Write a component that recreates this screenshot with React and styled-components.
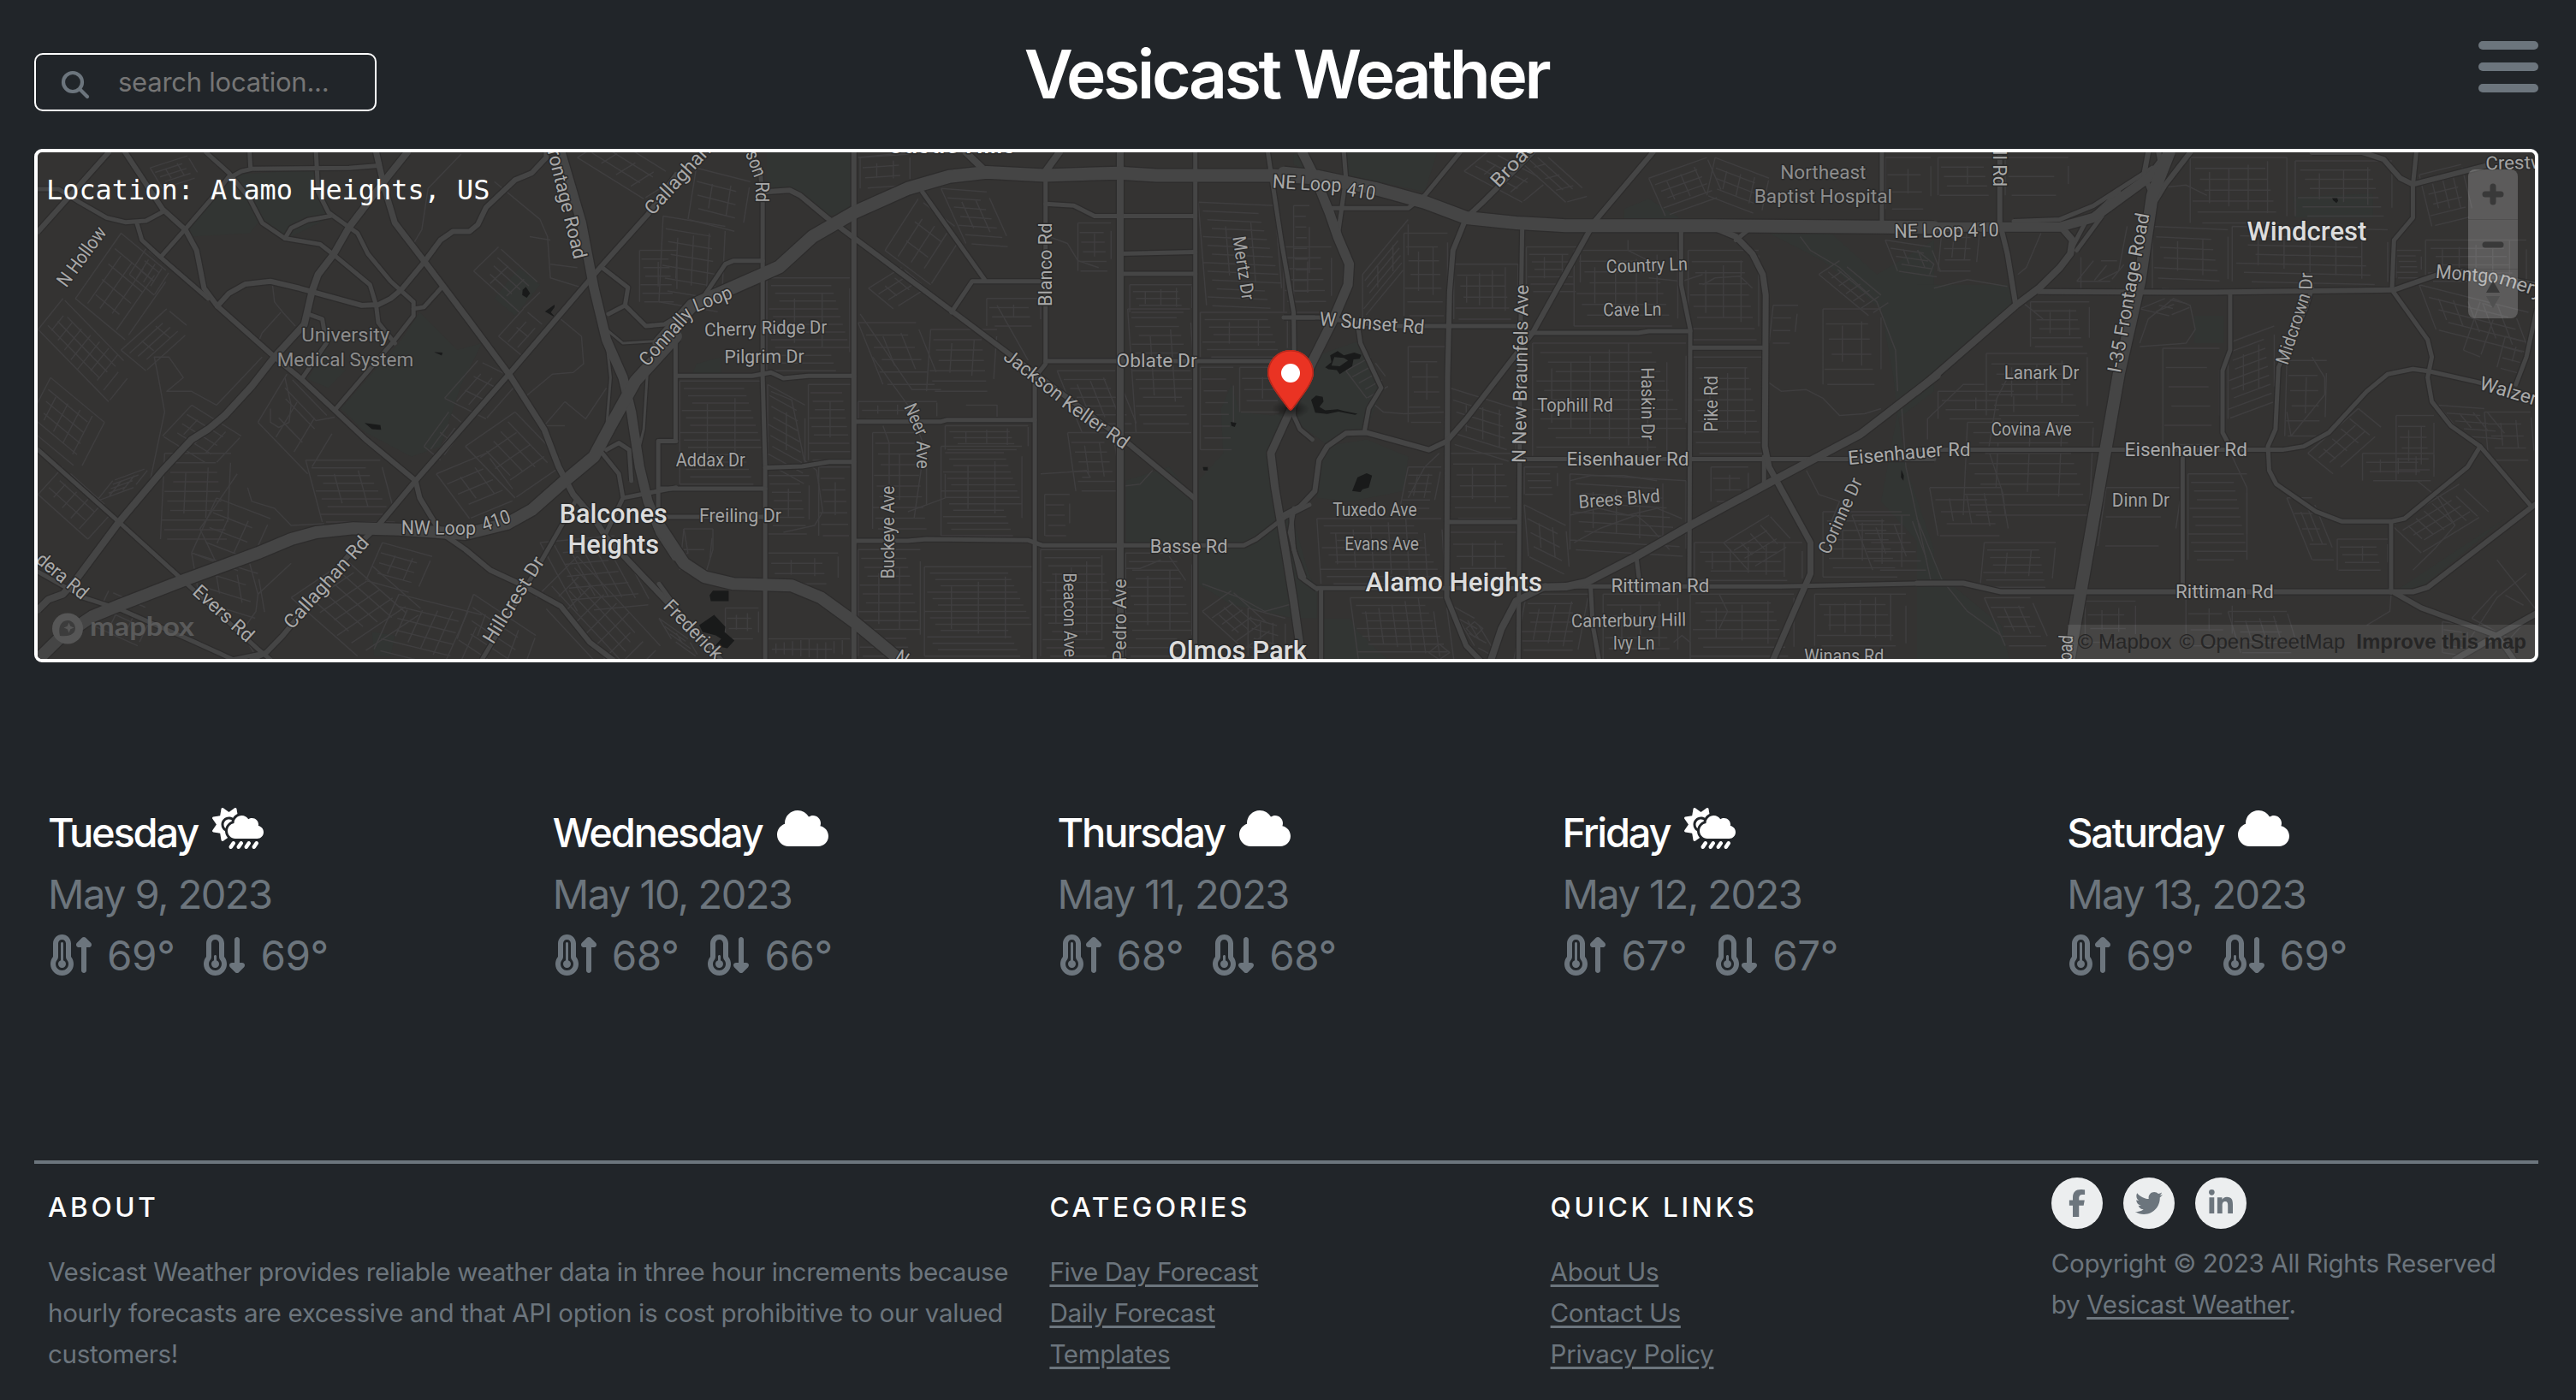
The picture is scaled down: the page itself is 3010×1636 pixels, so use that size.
import React from "react";
import styled, { createGlobalStyle } from "styled-components";
import {
  FaCloud,
  FaCloudSunRain,
  FaTemperatureArrowUp,
  FaTemperatureArrowDown,
  FaFacebookF,
  FaTwitter,
  FaLinkedinIn,
} from "react-icons/fa6";

const GlobalStyle = createGlobalStyle`
  * { box-sizing: border-box; }
  body {
    margin: 0;
    background: #212529;
    color: #fff;
    font-family: Inter, "Liberation Sans", sans-serif;
    font-size: 32px;
  }
`;

const Page = styled.div`
  display: flex;
  flex-direction: column;
  height: 1636px;
  padding: 0 44px 0 40px;
  overflow: hidden;
`;

/* ---------- header ---------- */

const Header = styled.header`
  display: grid;
  grid-template-columns: 1fr auto 1fr;
  flex: none;
  height: 174px;
`;

const SearchBox = styled.label`
  display: flex;
  align-items: center;
  width: 400px;
  height: 68px;
  margin-top: 62px;
  padding-left: 29px;
  border: 2px solid #fff;
  border-radius: 10px;
  color: #6c757d;
`;

const SearchIcon = styled.svg`
  flex: none;
  width: 34px;
  height: 34px;
  margin: 6px 33px 0 0;
`;

const SearchInput = styled.input`
  width: 270px;
  padding: 0;
  border: 0;
  outline: 0;
  background: transparent;
  color: #fff;
  font: 400 31px/48px Inter, sans-serif;
  letter-spacing: -0.25px;
  &::placeholder { color: #757575; opacity: 1; }
`;

const Title = styled.h1`
  margin: 39px 0 0;
  font-weight: 600;
  font-size: 78.5px;
  line-height: 96px;
  letter-spacing: -3.4px;
`;

const MenuButton = styled.div`
  display: flex;
  flex-direction: column;
  gap: 15px;
  justify-self: end;
  margin-top: 48px;
`;

const MenuBar = styled.span`
  width: 70px;
  height: 10px;
  border-radius: 5px;
  background: #6c757d;
`;

/* ---------- map ---------- */

const MapFrame = styled.section`
  position: relative;
  flex: none;
  height: 600px;
  border: 4px solid #fff;
  border-radius: 9px;
  overflow: hidden;
  background: #343332;
`;

const MapCanvas = styled.svg`
  display: block;
  width: 2918px;
  height: 592px;
`;

const MapCaption = styled.div`
  position: absolute;
  left: 10px;
  top: 24px;
  font: 400 31.9px/40px "DejaVu Sans Mono", monospace;
  color: #fff;
  white-space: nowrap;
`;

const MapControls = styled.div`
  position: absolute;
  top: 20px;
  right: 20px;
  width: 58px;
  border-radius: 8px;
  background: rgba(255, 255, 255, 0.2);
`;

const MapControl = styled.div`
  height: 58px;
  & + & { border-top: 1px solid rgba(40, 40, 40, 0.2); }
  svg { display: block; width: 58px; height: 58px; }
`;

const Attribution = styled.div`
  position: absolute;
  right: 0;
  bottom: 0;
  display: flex;
  gap: 9px;
  height: 40px;
  padding: 0 10px 0 12px;
  background: rgba(255, 255, 255, 0.09);
  color: #262626;
  font: 400 24px/40px "Liberation Sans", Arial, sans-serif;
  b { margin-left: 4px; }
`;

/*
 * The city is split into four tiles. Each one has its own drawing units,
 * 1568 on a side, and covers ox..ox+1568/sx on the canvas.
 */
const TILES = {
  a: { ox: 30, sx: 2.0632 },
  b: { ox: 770, sx: 2.0632 },
  c: { ox: 1500, sx: 2.0632 },
  d: { ox: 2240, sx: 2.0364 },
};
const OY = 160;
const SY = 2.4889;

const toCanvas = (tile, x, y) => [TILES[tile].ox + x / TILES[tile].sx, OY + y / SY];
const tileTransform = (tile) =>
  `translate(${TILES[tile].ox} ${OY}) scale(${1 / TILES[tile].sx} ${1 / SY})`;

const PARKS = {
  a: [
    "M490 110L700 95L740 230L640 290L560 250L540 280L400 290L385 268Z",
    "M950 510L1040 620L1100 600L1050 720L1000 900L930 930L820 860L760 790L900 600Z",
    "M1190 380L1240 430L1180 520L1130 470Z",
    "M835 1440L890 1450L880 1510H840Z",
    "M720 620L770 680L730 730L680 705Z",
  ],
  b: [
    "M260 45H470V220L400 230L320 150H260Z",
    "M1125 1000L1230 960L1290 1050V1180H1125Z",
    "M1355 790L1380 720L1400 800L1480 810L1520 800L1475 920L1500 1180L1530 1400L1380 1360L1300 1300V1000L1360 920Z",
    "M1530 50H1568V100L1530 80Z",
    "M90 660L150 640V690H80Z",
  ],
  c: [
    "M150 45H370L340 160L150 110Z",
    "M70 640L190 590L235 740L200 850L110 900L30 830Z",
    "M100 900L200 880L300 930L290 1030L160 1060L80 1050Z",
    "M1170 280H1320L1430 400L1568 300V740L1480 820L1470 700L1440 500L1300 360Z",
    "M1480 800L1500 960L1568 1200V1320L1530 1180L1440 1060Z",
    "M95 1400L160 1400L180 1440L250 1520H95Z",
    "M0 1100L20 1100L60 1270L80 1320V1400H30Z",
    "M820 210L880 180L960 240H820Z",
  ],
  d: [
    "M0 430H215L235 490L0 740Z",
    "M0 1110L60 1280L200 1420L220 1520H0Z",
    "M895 175L1085 165V235H900Z",
    "M1300 1190L1400 1110L1200 1310L1140 1320Z",
    "M660 520H730V600H660Z",
  ],
};

const WATER = {
  a: [
    "M1198 445L1206 436L1216 455L1208 468L1197 460Z",
    "M1275 488L1252 508L1278 526L1266 510L1275 495Z",
    "M985 626L1005 627L1003 636Z",
    "M817 832L855 838L857 852L835 850Z",
  ],
  b: [
    "M122 1333L130 1320H168V1350H125Z",
    "M97 1420L133 1390L160 1425L158 1440L182 1465L165 1487L135 1480L150 1460L137 1450L105 1440Z",
    "M1378 829L1392 832L1388 844L1380 840Z",
    "M1311 960H1323V970H1313Z",
  ],
  c: [
    "M100 670L115 655L112 635L130 623L145 635L170 627L187 634L183 645L168 647L165 667L135 690L128 678L108 676ZM122 640L115 665L135 667L155 650L145 643Z",
    "M66 765L78 752L94 756L96 770L86 785L100 795L130 792L145 797L178 805L172 808L132 799L105 806L76 802Z",
    "M165 1030L178 990L200 978L213 985L205 1020L190 1025L185 1033Z",
    "M1489 968L1495 985L1494 1000L1488 990Z",
  ],
  d: ["M988 178H1000L1002 186L998 192L990 184Z"],
};

/* [stroke width, path] */
const ROADS = {
  a: [
    [6, "M30 275L200 45M240 45L330 210L385 270L412 330L430 440L462 492L600 640L665 705L745 795L820 880L940 1000L950 1050L1000 1150L1060 1200L1120 1260L1200 1305L1290 1365L1360 1470L1415 1520"],
    [5, "M435 45L490 105L540 180L570 250L625 295L710 312L742 342L830 430L845 490L850 540L890 600"],
    [5, "M540 45L542 93M490 120L520 100L545 93L780 90L845 84M700 45L705 160L730 220L800 280L825 340L880 420L935 480L935 520L890 590L745 795"],
    [5, "M325 350L385 268L455 170L490 115M30 152L80 152L130 190L195 235L240 248L290 244L335 215M268 250L280 300L325 350L440 470"],
    [6, "M462 492L490 455L530 428L590 420L660 440L810 490L850 488L880 470L905 445L960 365L1000 300L1030 275L1070 275L1090 255L1110 205L1180 125L1220 105L1255 60V45"],
    [5, "M625 295L640 265L680 242L735 230M935 500L960 495L1005 435M680 515L715 530L725 600L665 705"],
    [6, "M1568 110L1500 225L1385 380L1165 690L940 1000L850 1130L790 1200L620 1450L580 1500L545 1520"],
    [5, "M1390 380L1452 438L1445 490L1495 550L1540 545L1568 525M1405 515L1445 490"],
    [5, "M30 910L225 1120L380 1290L560 1490L590 1520M30 1265L140 1340L230 1375L400 1465L500 1520L580 1500"],
    [5, "M1100 1520L1240 1240L1330 1050M1400 910L1430 890L1455 910L1460 1000M1390 920L1430 980L1440 1050L1400 1150M1440 1050L1568 1020M1525 1110V885H1568"],
    [3, "M1375 440L1400 590L1410 700L1400 850M1500 660L1490 850L1480 900M1400 560L1440 600L1568 590"],
    [7, "M845 45L865 150L890 250L960 360L1060 520L1165 690L1250 850L1285 960L1320 1040L1370 1110L1400 1165L1490 1280L1585 1400"],
    [8, "M920 45L870 120L780 262L742 342L705 400L690 450L672 545L600 640L545 725L480 810L440 850L400 880L330 970L225 1120L120 1290L90 1330L55 1345L30 1375"],
    [11, "M1290 45L1340 250L1370 440L1400 590L1440 700L1460 800L1480 960L1500 1060L1530 1150L1568 1220"],
    [14, "M25 1525L80 1460L160 1395L230 1360L380 1290L560 1210L640 1170L700 1150L790 1138L900 1142L1060 1155L1160 1125L1220 1085L1300 1000L1370 930L1410 840L1470 710L1568 580"],
  ],
  b: [
    [5, "M225 45L245 110L250 190V700L256 960V1520M932 120V660L906 700V1520M1293 45V1520"],
    [6, "M255 160L315 155L340 170L405 235L710 510L1130 890L1290 1050"],
    [5, "M635 160L785 415M705 510L755 420H925M932 195L1000 200L1050 230H1293M1112 340L1293 335M1112 398H1293"],
    [5, "M250 360H180L160 370L110 460M932 652H1510M40 590V885H0M40 695H225L270 685L300 702L360 695H470"],
    [5, "M470 828H680L695 823H906M256 962L345 958L410 945H470M0 1023H256M0 1105H256"],
    [5, "M470 1175H600L645 1170L890 1173L925 1188H1410L1440 1170L1510 1105L1568 1070M1530 525H1580"],
    [5, "M1468 45L1500 300L1530 510L1532 700L1530 810L1545 850L1575 880M1524 1100L1530 1200L1555 1280"],
    [5, "M0 1300L60 1400L150 1520"],
    [6, "M470 45V1520"],
    [8, "M1112 45V1520M740 45L790 103M932 100L965 45"],
    [9, "M1524 790L1475 920L1485 1020L1510 1200L1530 1350L1550 1520"],
    [14, "M0 1130L60 1240L110 1280L180 1300L320 1305L390 1340L470 1410L590 1530"],
    [15, "M0 600L80 490L250 400L290 378L370 290L470 220L600 150L700 115L790 103L930 112L1050 107L1110 105L1200 112L1480 112L1568 118"],
  ],
  c: [
    [5, "M145 45L150 120L130 290M110 207H300L340 170L425 45M0 525H85L240 550H580M590 570H855L880 565H980"],
    [6, "M440 235L480 190L600 45M440 235L408 330L400 450L395 700L393 1340L440 1480L480 1530"],
    [5, "M575 260L570 640L566 1520M958 270V430L980 560L978 1290M1158 930V1010M980 613H1162M580 937H1568"],
    [5, "M80 1315L40 1280L15 1150L25 1080M90 1312V1520M393 1120H566M740 1310L745 1420L760 1520M850 1220L858 1300"],
    [5, "M180 560L185 600L235 730L205 790L195 855M1442 45V260M1090 300L1120 270M700 1307H1200L1568 1298"],
    [6, "M890 45L750 245L600 570L440 820L393 885L350 910L200 860L150 862L105 900L85 940L75 1030L40 1075L0 1100"],
    [7, "M1040 265L1090 290L1130 340L1155 400L1162 460L1160 900L1170 960L1270 1180V1270L1180 1520"],
    [9, "M1575 693L1390 865L1180 1000L980 1130L850 1220L730 1295L680 1308L620 1310"],
    [5, "M620 1312H80"],
    [8, "M630 1308L560 1350L525 1430L500 1520"],
    [11, "M45 45L80 130L110 220L130 290L158 370L155 430L120 530L70 650L20 780"],
    [15, "M0 105L80 115L220 150L340 190L440 235L560 250L680 258H1040L1440 262L1568 263"],
  ],
  d: [
    [5, "M745 455V620L727 680V860L740 890M0 910H870L920 900L980 860L1070 740L1120 690L1180 675L1220 682L1330 712L1480 760"],
    [5, "M1188 45L1180 140V235L1135 300L1130 445L1215 590L1225 640L1215 700L1225 770L1270 840L1340 900L1462 1075"],
    [5, "M940 440L925 500L860 670L853 850L835 900L838 970L855 1010L950 1090L1010 1118H1130L1160 1110L1310 960L1340 900"],
    [5, "M1475 500L1450 640L1425 720M632 930V1310M1128 1120V1325"],
    [6, "M0 1298H110L200 1323H1180L1215 1310L1475 1065M1135 1325L1200 1370L1380 1450L1420 1520"],
    [7, "M1280 1520L1380 1450L1475 1385"],
    [6, "M197 45V250L215 340L235 490M940 45H1060L1110 65L1150 120L1180 138L1350 85"],
    [6, "M290 450L700 452L1135 445L1240 400L1300 390L1475 430"],
    [5, "M230 245L340 240L420 200L560 90M370 320L400 250L480 160M380 330L440 230"],
    [8, "M345 265L370 300L365 340L340 380L290 440L235 490L0 740"],
    [6, "M550 45L540 110L560 170M650 45L590 140L560 200M575 45L585 110"],
    [11, "M0 262L340 262L420 235L560 110L600 45"],
    [14, "M600 45L560 170L530 420L480 690L440 970L400 1250L360 1530"],
  ],
};

/* Residential grids: origin, two edge vectors, number of streets along each. */
const GRIDS = {
  a: [
    [30, 560, 170, 210, 60, -90, 4, 9], [120, 470, 110, -190, 120, 120, 5, 5], [60, 700, 130, 130, -60, 140, 5, 5],
    [250, 400, 40, -75, 60, 60, 4, 3], [335, 920, 160, 0, -10, 250, 9, 3], [400, 780, 120, 90, -70, 90, 4, 4],
    [675, 940, 180, 0, 40, 180, 8, 3], [560, 830, 70, -140, 120, 150, 3, 3], [460, 1050, 130, 60, -60, 160, 4, 3],
    [1010, 760, 80, -110, 100, 60, 4, 3], [1060, 900, 120, -100, 120, 150, 4, 5], [990, 980, 120, -60, 80, 130, 4, 3],
    [1080, 390, 60, -70, 110, 120, 3, 4], [960, 900, 60, -100, 40, 40, 3, 2], [1240, 1180, 90, 200, 180, -20, 6, 6],
    [1330, 1220, 200, 260, -100, 120, 6, 8], [860, 1180, 120, 40, -40, 110, 4, 3], [640, 1340, 160, -130, 160, 170, 6, 6],
    [900, 1330, 200, 60, -60, 160, 5, 6], [400, 1210, 160, 60, 20, 140, 3, 3], [30, 1040, 120, 130, 60, -80, 3, 5],
    [300, 90, 90, -35, 30, 60, 4, 3], [1330, 60, 160, 120, 80, -60, 3, 4],
    [1480, 330, 90, 0, 0, 150, 6, 2], [1080, 1330, 150, 120, -40, 130, 4, 4], [160, 1420, 110, 60, 40, -100, 2, 3],
    [170, 1060, 40, -60, 90, -40, 3, 4], [230, 620, 110, -120, 60, 60, 4, 3], [1140, 580, 60, -80, 60, 60, 3, 2],
  ],
  b: [
    [10, 230, 150, 30, -10, 250, 7, 4], [90, 90, 130, 40, -20, 150, 4, 3], [260, 410, 200, 0, 0, 270, 12, 3],
    [50, 710, 200, 0, 0, 300, 14, 3], [262, 720, 90, 60, 0, 230, 8, 2], [360, 720, 105, 0, 0, 220, 9, 2],
    [262, 985, 100, 0, 0, 170, 7, 2], [385, 960, 80, 0, 0, 200, 6, 2], [485, 60, 120, -10, 0, 90, 3, 3],
    [545, 330, 80, -150, 110, 100, 4, 3], [680, 150, 110, 10, 60, 160, 6, 3], [505, 440, 80, -60, 60, 60, 3, 3],
    [480, 540, 140, 0, 60, 180, 5, 3], [655, 560, 160, 0, -10, 180, 6, 3], [480, 770, 190, 0, 0, 50, 2, 4],
    [515, 860, 130, 0, 0, 280, 9, 2], [680, 900, 195, 0, 0, 260, 14, 3], [690, 840, 200, 0, 0, 70, 4, 4],
    [480, 1200, 150, 0, 0, 310, 12, 3], [640, 1250, 260, 0, 0, 260, 14, 4], [920, 1200, 185, 0, 0, 310, 13, 5],
    [1125, 1210, 160, 0, 0, 300, 12, 3], [960, 680, 140, 0, 60, 180, 7, 4], [985, 860, 110, 0, 20, 170, 6, 3],
    [1130, 500, 150, 0, 20, 360, 14, 3], [1135, 430, 150, 0, 0, 80, 4, 4], [1300, 190, 185, 10, 20, 300, 12, 3],
    [1305, 510, 210, 0, 0, 130, 6, 3], [1010, 250, 80, 0, 0, 140, 5, 2], [1400, 670, 110, 0, 0, 130, 4, 2],
    [1305, 670, 80, 0, 0, 240, 7, 1], [1310, 1380, 70, -60, 100, 110, 5, 4], [1420, 1370, 90, 30, 0, 140, 5, 3],
    [262, 1210, 170, 0, 0, 90, 3, 3], [262, 1460, 200, 0, 0, 60, 2, 10], [60, 1140, 70, 0, -10, 120, 2, 1],
    [1530, 200, 38, 0, 0, 280, 9, 1], [930, 1040, 60, 0, 0, 120, 4, 1], [790, 470, 130, 0, 0, 80, 3, 2],
    [160, 1370, 80, 0, 0, 90, 3, 3], [0, 1400, 70, 60, 30, 60, 3, 2],
  ],
  c: [
    [435, 100, 140, 90, 60, -60, 3, 4], [560, 60, 120, 130, 60, -20, 3, 4], [880, 120, 140, -60, 40, 110, 5, 4],
    [1040, 60, 130, 60, -20, 110, 4, 4], [0, 320, 115, 0, 0, 190, 6, 2], [190, 400, 110, -160, 0, 130, 5, 3],
    [290, 280, 105, 0, 0, 240, 6, 3], [410, 370, 155, 0, 0, 160, 5, 5], [585, 320, 130, 0, 0, 130, 6, 3],
    [700, 330, 250, 0, 0, 220, 7, 5], [975, 330, 170, 0, 0, 260, 8, 4], [600, 600, 370, 0, 0, 330, 12, 8],
    [300, 610, 90, 0, 0, 220, 5, 2], [400, 730, 160, 60, 0, 160, 5, 4], [985, 640, 170, 0, 0, 280, 9, 4],
    [580, 960, 80, 0, 0, 80, 4, 1], [400, 920, 165, 0, 0, 190, 6, 3], [400, 1150, 165, 0, 0, 140, 4, 3],
    [690, 980, 280, 20, 0, 220, 8, 5], [580, 1070, 100, 60, 10, 150, 4, 3], [80, 1110, 300, 0, 10, 190, 9, 7],
    [160, 1340, 230, 0, 20, 180, 8, 7], [400, 1360, 60, 40, 60, 120, 3, 2], [585, 1330, 150, 0, -30, 190, 7, 4],
    [770, 1330, 180, 0, 0, 190, 6, 4], [980, 1330, 250, 0, 0, 180, 7, 4], [990, 1180, 260, 0, 0, 110, 4, 6],
    [1060, 1180, 110, -80, 60, 80, 3, 4], [1300, 1090, 190, 0, 0, 190, 7, 4], [1370, 1100, 140, 0, 50, 160, 6, 3],
    [1290, 400, 120, 120, 50, -40, 3, 6], [1300, 500, 140, 0, 0, 220, 5, 3], [1180, 490, 60, 0, -10, 110, 3, 1],
    [1450, 300, 110, 20, 30, 90, 4, 3], [300, 960, 80, 0, -20, 120, 5, 3], [1030, 960, 90, 0, 0, 100, 3, 2],
    [1280, 1330, 220, 0, 0, 150, 5, 6], [150, 680, 60, -40, 50, 80, 4, 1], [1450, 60, 110, 0, 0, 150, 3, 2],
  ],
  d: [
    [50, 60, 140, 0, 0, 110, 4, 2], [210, 60, 150, 0, 0, 110, 2, 1], [560, 260, 180, 10, 0, 180, 6, 3],
    [650, 60, 230, 0, 0, 190, 6, 5], [900, 70, 230, 0, 0, 160, 6, 4], [750, 260, 370, 10, 0, 160, 6, 6],
    [1195, 110, 100, -30, 30, 150, 5, 4], [1210, 300, 240, 0, 0, 120, 5, 6], [1195, 430, 260, 80, 40, 130, 4, 7],
    [1140, 330, 60, 0, 0, 80, 5, 1], [270, 480, 140, 0, 0, 130, 5, 3], [165, 630, 240, 0, 0, 180, 6, 4],
    [50, 740, 180, 0, 0, 80, 3, 2], [120, 830, 300, 0, -10, 270, 9, 4], [30, 1020, 170, 0, 20, 140, 4, 4],
    [160, 1180, 170, 0, -10, 130, 6, 3], [160, 1340, 110, 0, 50, 140, 5, 3], [585, 615, 135, 0, 0, 280, 5, 1],
    [645, 980, 140, 0, 0, 250, 10, 1], [740, 600, 110, -50, 0, 220, 8, 3], [880, 650, 95, 0, -5, 220, 5, 2],
    [640, 1340, 110, 0, 0, 140, 3, 2], [740, 1380, 140, 0, 30, 120, 4, 4], [930, 920, 120, -130, 60, 60, 3, 5],
    [1140, 810, 90, 0, 0, 190, 6, 3], [1060, 920, 170, 0, 0, 80, 3, 4], [1240, 780, 110, 10, 60, 90, 4, 3],
    [1130, 1130, 160, -120, 70, 80, 4, 7], [880, 1050, 60, 0, 60, 180, 4, 3], [1000, 1170, 120, 0, 0, 90, 4, 2],
    [1350, 800, 110, 0, 10, 140, 4, 3], [530, 500, 60, -30, 70, 20, 2, 2], [60, 260, 90, 0, -10, 130, 4, 3],
    [450, 1020, 180, 0, -20, 170, 2, 1], [1320, 1400, 60, -80, 90, 60, 1, 1], [1250, 1410, 60, 10, 0, 90, 4, 1],
    [400, 1350, 120, 0, 0, 120, 3, 3], [1300, 620, 40, -140, 40, 20, 1, 1], [1400, 580, 60, 20, -20, 90, 3, 2],
    [380, 420, 40, -60, 80, 0, 2, 1],
  ],
};

/* Winding residential streets that do not belong to a grid. */
const LANES = {
  a: "M595 430L600 480L620 510L650 550M615 510L570 570L560 600M570 640L460 780L400 740L340 740L380 700L345 640L310 640L320 700L335 800L300 1000M590 790V830L610 845L635 830L640 780L625 700M625 730L700 825L745 815M1050 50L970 150L955 270L935 310M1130 130L1180 180L1240 240L1258 290L1265 410L1345 440M1215 290L1265 300M1265 370L1330 380M1290 530L1340 580L1345 660L1320 685L1270 690L1200 760M1300 770L1250 840L1300 840M1300 770L1350 820L1400 730M510 980L420 1140L440 1190L460 1240L410 1270M535 1020L545 1060L600 1080L640 1130L720 1125M540 1240L560 1330L555 1380L520 1440L550 1500M560 1330L640 1240",
  b: "M485 515L610 735H680M515 640L600 780L640 900L615 1110M690 980V1050L600 1090M540 840L555 890V1010M815 490L890 650M940 290L985 310L1010 360L1060 380M920 980L985 975L1030 970L1040 990L1020 990M1190 970L1160 1010L1125 1015M740 780H815V830M130 1140V1200L115 1260M60 1140L70 1210L40 1230M270 740L320 765L350 940L380 970L395 1090L375 1130L300 1150M480 60L600 45M1210 1230L1160 1255L1125 1255M1230 1220L1270 1290M1310 1300L1400 1340L1460 1380L1520 1360",
  c: "M220 780L240 800L290 805L390 800M300 1050L340 960L375 920M830 300V330L880 360M880 410L960 420L1010 400M1010 430L1040 410L1100 405L1130 440M1170 715L1200 740L1260 735L1300 760L1340 810L1400 805L1440 790M1245 290L1270 330L1340 380L1430 480L1475 620L1480 740M690 1000L740 985L820 985L900 1000M690 1100L760 1080L830 1100L900 1080L960 1110M700 1180L760 1140L850 1100L880 1130L930 1200M440 1430L460 1410L480 1430L460 1455ZM350 1500L375 1475L400 1500L375 1520ZM940 1470L960 1450L980 1470L980 1520M1050 1430L1070 1380L1050 1330M1260 970L1290 1040L1340 1060L1320 1120M1490 790L1500 960L1560 1290",
  d: "M530 600L550 530L610 470L650 490L662 560L640 600L530 610M500 260L480 390L430 420M40 440L120 415L215 435M240 470L270 500L300 530M25 880V820L110 720H160M220 690L190 760L170 910L205 1040L210 1100M0 330L40 370L30 400M880 800L890 870L930 810L970 750L970 700L940 640M750 930L785 1020V1230M1070 1420L1125 1380L1128 1330M1190 1000L1240 1050L1280 1130L1230 1200L1180 1260M1310 1470L1380 1340L1450 1270M1380 1230L1470 1370M0 1110L60 1290L120 1380L200 1450M295 280L260 380L240 400M390 350V440M560 150L640 140L690 170",
};

function gridPath([x, y, ux, uy, vx, vy, n, m]) {
  const out = [];
  for (let i = 0; i <= n; i++) {
    const s = ((i * 37) % 7) / 40;
    const e = 1 - ((i * 53) % 9) / 36;
    const bx = x + (vx * i) / n;
    const by = y + (vy * i) / n;
    out.push(`M${bx + ux * s} ${by + uy * s}L${bx + ux * e} ${by + uy * e}`);
  }
  for (let j = 0; j <= m; j++) {
    const s = ((j * 29) % 5) / 18;
    const e = 1 - ((j * 41) % 7) / 20;
    const bx = x + (ux * j) / m;
    const by = y + (uy * j) / m;
    out.push(`M${bx + vx * s} ${by + vy * s}L${bx + vx * e} ${by + vy * e}`);
  }
  return out.join("");
}

/* [text, x1, y1, x2, y2, kind] with the baseline running from 1 to 2 */
const LABELS = {
  a: [
    ["N Hollow", 98, 440, 197, 278], ["Frontage Road", 1252, 12, 1322, 358], ["Callaghan Rd", 1512, 230, 1700, -20],
    ["University", 665, 595, 877, 595, "poi"], ["Medical System", 606, 668, 935, 668, "poi"],
    ["NW Loop", 905, 1155, 1085, 1157], ["410", 1106, 1148, 1172, 1119],
    ["dera Rd", 22, 1235, 135, 1348], ["Evers Rd", 400, 1327, 533, 1472], ["Callaghan Rd", 642, 1434, 830, 1182],
    ["Hillcrest Dr", 1127, 1478, 1252, 1235], ["Balcones", 1287, 1123, 1547, 1123, "town"],
    ["Heights", 1307, 1211, 1527, 1211, "town"],
  ],
  b: [
    ["Castle Hills", 550, 47, 860, 47, "town"], ["Connally", -28, 670, 84, 517], ["Loop", 90, 510, 180, 467],
    ["Cherry", 110, 580, 235, 576, "small"], ["Ridge Dr", 247, 573, 405, 571, "small"], ["Pilgrim Dr", 158, 658, 350, 656, "small"],
    ["son", 208, 48, 230, 120], ["Rd", 233, 130, 233, 190], ["Addax Dr", 41, 957, 208, 957, "small"],
    ["Freiling Dr", 97, 1119, 295, 1119, "small"], ["Jackson", 828, 645, 960, 770], ["Keller Rd", 968, 782, 1120, 910],
    ["Blanco Rd", 946, 493, 946, 250], ["Mertz Dr", 1383, 292, 1406, 476, "small"], ["Oblate Dr", 1103, 669, 1297, 669],
    ["Neer", 590, 785, 622, 872, "small"], ["Ave", 622, 884, 622, 965, "small"], ["Buckeye Ave", 568, 1285, 568, 1015, "small"],
    ["Beacon Ave", 975, 1268, 977, 1513, "small"], ["San Pedro Ave", 1127, 1630, 1127, 1285, "small"],
    ["Basse Rd", 1184, 1209, 1371, 1209], ["Olmos Park", 1228, 1520, 1562, 1520, "town"],
    ["Frederick", 8, 1368, 135, 1525], ["N", 566, 1522, 590, 1540],
  ],
  c: [
    ["NE Loop", -28, 148, 138, 160], ["410", 150, 170, 218, 184], ["Broad", 518, 150, 612, 30],
    ["W Sunset Rd", 85, 548, 338, 573], ["Northeast", 1197, 121, 1404, 121, "poi"],
    ["Baptist Hospital", 1134, 192, 1467, 192, "poi"], ["Country Ln", 778, 396, 974, 387, "small"],
    ["Cave Ln", 770, 521, 911, 519, "small"], ["N New Braunfels Ave", 583, 948, 590, 430],
    ["Tophill Rd", 611, 799, 794, 799, "small"], ["Haskin Dr", 862, 670, 863, 883, "small"], ["Pike Rd", 1046, 858, 1046, 695, "small"],
    ["Eisenhauer Rd", 682, 956, 977, 956], ["Brees Blvd", 712, 1080, 908, 1062, "small"],
    ["Tuxedo Ave", 118, 1103, 321, 1103, "small"], ["Evans Ave", 147, 1202, 326, 1202, "small"],
    ["Alamo Heights", 197, 1322, 623, 1322, "town"], ["Rittiman Rd", 789, 1324, 1026, 1324],
    ["Canterbury Hill", 693, 1426, 970, 1422, "small"], ["Ivy Ln", 794, 1490, 894, 1490, "small"],
    ["Winans Rd", 1255, 1529, 1447, 1529, "small"], ["Corinne Dr", 1315, 1217, 1396, 1002, "small"],
  ],
  d: [
    ["NE Loop 410", -54, 294, 195, 289], ["Eisenhauer", -163, 953, 62, 928], ["Rd", 74, 928, 127, 928],
    ["ll Rd", 182, 40, 182, 145], ["Windcrest", 785, 302, 1070, 302, "town"], ["Crestway", 1353, 95, 1540, 90, "small"],
    ["Montgo", 1233, 410, 1382, 426], ["mery", 1383, 426, 1485, 468], ["Midcrown", 882, 665, 936, 462, "small"],
    ["Dr", 940, 445, 941, 395, "small"], ["I-35 Frontage Road", 484, 688, 553, 225], ["Lanark Dr", 207, 704, 386, 704, "small"],
    ["Covina Ave", 176, 869, 368, 869, "small"], ["Eisenhauer Rd", 494, 929, 786, 929],
    ["Dinn Dr", 464, 1076, 601, 1076, "small"], ["Rittiman Rd", 615, 1341, 849, 1341],
    ["Walzem", 1336, 733, 1495, 790], ["Road", 366, 1552, 371, 1450],
  ],
};

const LABEL_STYLE = {
  road: { size: 22.5, fill: "#a9a9a9", weight: 400 },
  small: { size: 21.5, fill: "#a3a3a3", weight: 400 },
  poi: { size: 22.5, fill: "#8d8d8d", weight: 400 },
  town: { size: 30.5, fill: "#dcdcdc", weight: 500 },
};

const LabelText = styled.text`
  font-family: Roboto, "Liberation Sans", sans-serif;
  font-size: ${(p) => LABEL_STYLE[p.$kind].size}px;
  font-weight: ${(p) => LABEL_STYLE[p.$kind].weight};
  fill: ${(p) => LABEL_STYLE[p.$kind].fill};
  stroke: #2a2a2a;
  stroke-width: 3px;
  stroke-linejoin: round;
  paint-order: stroke;
`;

function MapLabel({ tile, label }) {
  const [text, x1, y1, x2, y2, kind = "road"] = label;
  const [ax, ay] = toCanvas(tile, x1, y1);
  const [bx, by] = toCanvas(tile, x2, y2);
  const angle = (Math.atan2(by - ay, bx - ax) * 180) / Math.PI;
  return (
    <LabelText
      $kind={kind}
      transform={`translate(${ax} ${ay}) rotate(${angle})`}
      textLength={Math.hypot(bx - ax, by - ay)}
      lengthAdjust="spacingAndGlyphs"
    >
      {text}
    </LabelText>
  );
}

const tileNames = Object.keys(TILES);

function EachTile({ children, ...rest }) {
  return (
    <g {...rest}>
      {tileNames.map((t) => (
        <g key={t} transform={tileTransform(t)}>
          {children(t)}
        </g>
      ))}
    </g>
  );
}

const Line = (props) => <path vectorEffect="non-scaling-stroke" {...props} />;

function CityMap() {
  return (
    <MapCanvas viewBox="44 178 2918 592">
      <defs>
        <radialGradient id="pinShadow">
          <stop offset="0" stopColor="#000" stopOpacity="0.55" />
          <stop offset="1" stopColor="#000" stopOpacity="0" />
        </radialGradient>
      </defs>
      <EachTile fill="#323533">{(t) => PARKS[t].map((d) => <path key={d} d={d} />)}</EachTile>
      <EachTile fill="none" stroke="#3f3e3f" strokeWidth="1.5">
        {(t) => (
          <>
            {GRIDS[t].map((g, i) => <Line key={i} d={gridPath(g)} />)}
            <Line d={LANES[t]} strokeLinejoin="round" />
          </>
        )}
      </EachTile>
      <EachTile fill="#191a1a" fillRule="evenodd">{(t) => WATER[t].map((d) => <path key={d} d={d} />)}</EachTile>
      <EachTile fill="none" stroke="#2d2c2c" strokeLinejoin="round">
        {(t) => ROADS[t].map(([w, d]) => <Line key={d} d={d} strokeWidth={w + 2.5} />)}
      </EachTile>
      <EachTile fill="none" stroke="#454545" strokeLinejoin="round" strokeLinecap="round">
        {(t) => ROADS[t].map(([w, d]) => <Line key={d} d={d} strokeWidth={w} />)}
      </EachTile>
      {tileNames.map((t) => LABELS[t].map((l) => <MapLabel key={l.join()} tile={t} label={l} />))}

      <ellipse cx="1508" cy="478" rx="22" ry="11" fill="url(#pinShadow)" />
      <g transform="translate(1481 409) scale(2)">
        <path
          fill="#ea3323"
          d="M27 13.5C27 19.07 20.25 27 14.75 34.5C14.02 35.5 12.98 35.5 12.25 34.5C6.75 27 0 19.22 0 13.5C0 6.04 6.04 0 13.5 0C20.96 0 27 6.04 27 13.5Z"
        />
        <path
          fill="none"
          stroke="#b8281b"
          strokeWidth="0.8"
          d="M26.6 13.5C26.6 19 20 26.8 14.5 34.3C14 35 13 35 12.5 34.3C7 26.8 0.4 19 0.4 13.5C0.4 6.3 6.3 0.4 13.5 0.4C20.7 0.4 26.6 6.3 26.6 13.5Z"
        />
        <circle cx="13.5" cy="13.5" r="5.5" fill="#fff" />
      </g>

      <g>
        <circle cx="79" cy="734.5" r="18" fill="#565656" />
        <path d="M70 743c-2-9 0-15 6-17.5a9 9 0 0 1 10 14c-4 4-10 4-16 3.5z" fill="#3c3c3c" />
        <path d="M80.5 727.5l1.8 4.2 4.2 1.8-4.2 1.8-1.8 4.2-1.8-4.2-4.2-1.8 4.2-1.8z" fill="#565656" />
        <text
          x="105"
          y="743"
          fill="#5a5a5a"
          fontFamily="Lato, sans-serif"
          fontWeight="700"
          fontSize="31"
          textLength="122"
          lengthAdjust="spacingAndGlyphs"
        >
          mapbox
        </text>
      </g>
    </MapCanvas>
  );
}

/* ---------- forecast ---------- */

const Forecast = styled.section`
  display: grid;
  grid-template-columns: repeat(5, 589.8px);
  flex: none;
  height: 582px;
  padding: 163px 0 0 16px;
`;

const Day = styled.article`
  display: flex;
  flex-direction: column;
  font-size: 47.5px;
  line-height: 72px;
  color: #6c757d;
`;

const DayName = styled.h4`
  display: flex;
  align-items: center;
  gap: 17px;
  height: 72px;
  margin: 0;
  color: #fff;
  font-size: 47px;
  font-weight: 500;
  letter-spacing: -2.2px;
  svg { height: 48px; width: 60px; margin-bottom: 10px; }
`;

const DayDate = styled.div`
  height: 72px;
  font-size: 47px;
  letter-spacing: -1.55px;
`;

const Temps = styled.div`
  display: flex;
  gap: 31px;
  height: 72px;
`;

const Temp = styled.span`
  display: flex;
  align-items: center;
  gap: 15px;
  letter-spacing: -0.4px;
  svg { flex: none; height: 48px; width: 54px; margin-bottom: 2px; }
`;

const DAYS = [
  { name: "Tuesday", date: "May 9, 2023", icon: FaCloudSunRain, high: 69, low: 69 },
  { name: "Wednesday", date: "May 10, 2023", icon: FaCloud, high: 68, low: 66 },
  { name: "Thursday", date: "May 11, 2023", icon: FaCloud, high: 68, low: 68 },
  { name: "Friday", date: "May 12, 2023", icon: FaCloudSunRain, high: 67, low: 67 },
  { name: "Saturday", date: "May 13, 2023", icon: FaCloud, high: 69, low: 69 },
];

/* ---------- footer ---------- */

const Footer = styled.footer`
  display: grid;
  grid-template-columns: 2fr 1fr 1fr 1fr;
  flex: 1;
  border-top: 4px solid #6c757d;
  color: #6c757d;
  font-size: 29.6px;
  line-height: 48px;
  letter-spacing: -0.36px;
`;

const FooterColumn = styled.div`
  min-width: 0;
  padding: ${(p) => p.$top || 32}px 0 0 16px;
  white-space: nowrap;
`;

const FooterHeading = styled.h6`
  margin: 0 0 32px;
  color: #fff;
  font-size: 31.5px;
  font-weight: 500;
  line-height: 38px;
  letter-spacing: 3.7px;
`;

const Paragraph = styled.p`
  margin: 0;
`;

const LinkList = styled.ul`
  margin: 0;
  padding: 0;
  list-style: none;
`;

const FooterLink = styled.a`
  color: #6c757d;
  text-decoration: underline;
  text-decoration-thickness: 2.5px;
  text-underline-offset: 4px;
`;

const Socials = styled.div`
  display: flex;
  gap: 24px;
  margin: 0 0 16px;
`;

const Social = styled.a`
  display: flex;
  align-items: center;
  justify-content: center;
  width: 60px;
  height: 60px;
  border-radius: 50%;
  background: #eceeef;
  color: #6c757d;
  svg { width: 32px; height: 32px; }
`;

export default function App() {
  return (
    <Page>
      <GlobalStyle />
      <Header>
        <SearchBox>
          <SearchIcon viewBox="0 0 34 34" fill="none" stroke="currentColor" strokeWidth="4.2" strokeLinecap="round">
            <circle cx="14" cy="14" r="11" />
            <path d="M22.5 22.5L31 31" />
          </SearchIcon>
          <SearchInput placeholder="search location..." />
        </SearchBox>
        <Title>Vesicast Weather</Title>
        <MenuButton>
          <MenuBar />
          <MenuBar />
          <MenuBar />
        </MenuButton>
      </Header>

      <MapFrame>
        <CityMap />
        <MapCaption>Location: Alamo Heights, US</MapCaption>
        <MapControls>
          <MapControl>
            <svg viewBox="0 0 58 58">
              <path d="M29 20V38M20 29H38" stroke="#393939" strokeWidth="7" strokeLinecap="round" />
            </svg>
          </MapControl>
          <MapControl>
            <svg viewBox="0 0 58 58">
              <path d="M20 29H38" stroke="#393939" strokeWidth="7" strokeLinecap="round" />
            </svg>
          </MapControl>
          <MapControl>
            <svg viewBox="0 0 58 58">
              <path d="M21 27L29 13L37 27Z" fill="#393939" />
              <path d="M21 31L29 45L37 31Z" fill="#505050" />
            </svg>
          </MapControl>
        </MapControls>
        <Attribution>
          <span>© Mapbox</span>
          <span>© OpenStreetMap</span>
          <b>Improve this map</b>
        </Attribution>
      </MapFrame>

      <Forecast>
        {DAYS.map(({ name, date, icon: Icon, high, low }) => (
          <Day key={name}>
            <DayName>
              {name}
              <Icon />
            </DayName>
            <DayDate>{date}</DayDate>
            <Temps>
              <Temp>
                <FaTemperatureArrowUp />
                {high}°
              </Temp>
              <Temp>
                <FaTemperatureArrowDown />
                {low}°
              </Temp>
            </Temps>
          </Day>
        ))}
      </Forecast>

      <Footer>
        <FooterColumn>
          <FooterHeading>ABOUT</FooterHeading>
          <Paragraph>
            Vesicast Weather provides reliable weather data in three hour increments because
            <br />
            hourly forecasts are excessive and that API option is cost prohibitive to our valued
            <br />
            customers!
          </Paragraph>
        </FooterColumn>
        <FooterColumn>
          <FooterHeading>CATEGORIES</FooterHeading>
          <LinkList>
            <li><FooterLink>Five Day Forecast</FooterLink></li>
            <li><FooterLink>Daily Forecast</FooterLink></li>
            <li><FooterLink>Templates</FooterLink></li>
          </LinkList>
        </FooterColumn>
        <FooterColumn>
          <FooterHeading>QUICK LINKS</FooterHeading>
          <LinkList>
            <li><FooterLink>About Us</FooterLink></li>
            <li><FooterLink>Contact Us</FooterLink></li>
            <li><FooterLink>Privacy Policy</FooterLink></li>
          </LinkList>
        </FooterColumn>
        <FooterColumn $top={16}>
          <Socials>
            <Social><FaFacebookF /></Social>
            <Social><FaTwitter /></Social>
            <Social><FaLinkedinIn /></Social>
          </Socials>
          <Paragraph>
            Copyright © 2023 All Rights Reserved
            <br />
            by <FooterLink>Vesicast Weather</FooterLink>.
          </Paragraph>
        </FooterColumn>
      </Footer>
    </Page>
  );
}
